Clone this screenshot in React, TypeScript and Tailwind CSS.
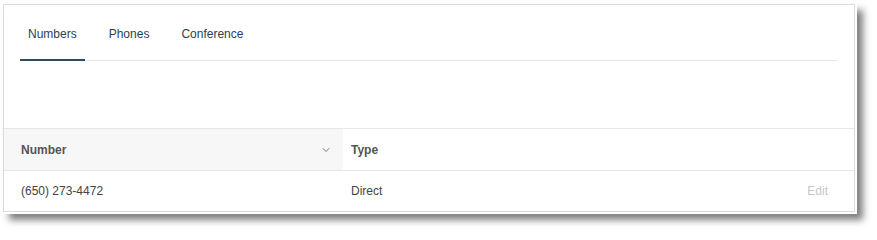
import { ChevronDown } from "lucide-react";

const tabs = ["Numbers", "Phones", "Conference"];

export default function App() {
  return (
    <div className="w-[877px] h-[234px] bg-white overflow-hidden font-['Liberation_Sans',Arial,sans-serif]">
      <div className="ml-[3px] mt-[4px] w-[854px] h-[210px] bg-white shadow-[6px_6px_7px_rgba(0,0,0,0.5)]">
        <div className="w-[852px] h-[208px] border border-[#dcdcdc] flex flex-col">
          {/* Tabs */}
          <div className="mx-[16px] flex gap-[16px] border-b border-[#e9e9e9] h-[56px] items-end">
            {tabs.map((t, i) => (
              <div
                key={t}
                className={
                  i === 0
                    ? "px-[8px] pb-[17px] text-[12px] leading-[16px] text-[#2c3e50] border-b-2 border-[#2f4a63] -mb-px"
                    : "px-[8px] pb-[18px] text-[12px] leading-[16px] text-[#2c3e50]"
                }
              >
                {t}
              </div>
            ))}
          </div>

          <div className="h-[67px]" />

          {/* Table */}
          <div className="border-t border-[#e6e6e6]">
            <div className="flex h-[42px] border-b border-[#e6e6e6] text-[12px] font-bold text-[#555]">
              <div className="w-[339px] bg-[#f7f7f7] flex items-center pl-[17px] pr-[11px]">
                <span className="flex-1">Number</span>
                <ChevronDown size={12} strokeWidth={2} className="text-[#777]" />
              </div>
              <div className="flex-1 flex items-center pl-[8px]">Type</div>
            </div>
            <div className="flex h-[40px] text-[12px] text-[#444]">
              <div className="w-[339px] flex items-center pl-[17px]">(650) 273-4472</div>
              <div className="flex-1 flex items-center pl-[8px]">Direct</div>
              <div className="flex items-center pr-[26px] text-[#c6c6c6]">Edit</div>
            </div>
          </div>
        </div>
      </div>
    </div>
  );
}
